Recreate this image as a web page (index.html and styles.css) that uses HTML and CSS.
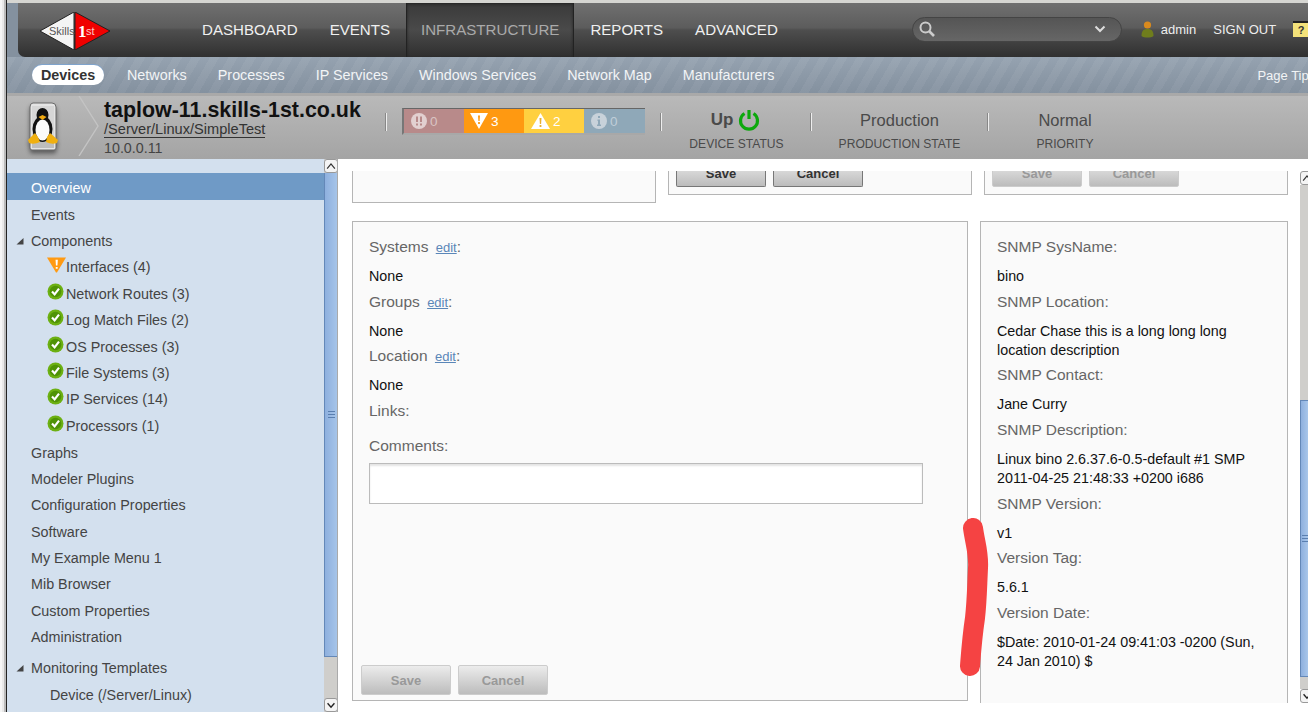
FILE: index.html
```html
<!DOCTYPE html>
<html lang="en">
<head>
    <meta charset="UTF-8">
    <title>taplow-11.skills-1st.co.uk</title>
    <link rel="stylesheet" href="styles.css">
</head>
<body>

<svg class="defs" width="0" height="0">
    <symbol id="ok" viewBox="0 0 17 17">
        <circle cx="8.5" cy="8.5" r="8" fill="#6cb012"/>
        <circle cx="8.5" cy="8.5" r="5.8" fill="#4f9306"/>
        <path d="M5 8.6 L7.6 11.4 L12 5.6" fill="none" stroke="#fff" stroke-width="2.2"/>
    </symbol>
    <symbol id="warn" viewBox="0 0 20 16">
        <path d="M0 0 H20 L10.5 16 H9.5 Z" fill="#ff9a12"/>
        <path d="M9 2.5 H11.4 L11 8.5 H9.4 Z M9.2 10 H11.2 V12 H9.2 Z" fill="#fff"/>
    </symbol>
    <symbol id="expand" viewBox="0 0 8 8">
        <path d="M7.5 1 V7.5 H0.5 Z" fill="#444"/>
    </symbol>
    <symbol id="up" viewBox="0 0 14 14">
        <path d="M2.5 10 L7 4.5 L11.5 10" fill="none" stroke="#333" stroke-width="1.4"/>
    </symbol>
    <symbol id="down" viewBox="0 0 14 14">
        <path d="M3 5 L7 9.5 L11 5" fill="none" stroke="#222" stroke-width="1.6"/>
    </symbol>
</svg>

<div class="frame-edge"></div>

<div class="page">

    <div class="topnav-wrap">
        <div class="topnav">
            <div class="logo">
                <svg width="70" height="38" viewBox="0 0 70 38">
                    <path d="M0 19 L34 0 V38 Z" fill="#f4f4f4" stroke="#222" stroke-width="1"/>
                    <path d="M35 0 L70 19 L35 38 Z" fill="#f00000" stroke="#222" stroke-width="1"/>
                    <text x="9" y="23" class="logo-skills">Skills</text>
                    <text x="38" y="25" class="logo-first">1</text>
                    <text x="46" y="23" class="logo-st">st</text>
                </svg>
            </div>
            <a class="nav-item">DASHBOARD</a>
            <a class="nav-item">EVENTS</a>
            <a class="nav-item active">INFRASTRUCTURE</a>
            <a class="nav-item">REPORTS</a>
            <a class="nav-item">ADVANCED</a>
            <div class="search">
                <svg width="18" height="18" viewBox="0 0 18 18">
                    <circle cx="7.5" cy="7.5" r="5" fill="none" stroke="#ccc" stroke-width="2"/>
                    <path d="M11 11 L16 16" stroke="#ccc" stroke-width="2.6"/>
                </svg>
                <svg class="search-arrow" width="12" height="8" viewBox="0 0 12 8">
                    <path d="M1.5 1.5 L6 6 L10.5 1.5" fill="none" stroke="#ddd" stroke-width="2"/>
                </svg>
            </div>
            <svg class="user-icon" width="13" height="17" viewBox="0 0 13 17">
                <circle cx="6.5" cy="4" r="3.6" fill="#d98a1e"/>
                <path d="M0.5 15 C0.5 9 3 8 6.5 8 C10 8 12.5 9 12.5 15 C10 17 3 17 0.5 15 Z" fill="#6f7d1c"/>
            </svg>
            <span class="user-name">admin</span>
            <span class="sign-out">SIGN OUT</span>
            <span class="help-icon">?</span>
        </div>
    </div>

    <div class="subnav">
        <a class="sub-item current">Devices</a>
        <a class="sub-item">Networks</a>
        <a class="sub-item">Processes</a>
        <a class="sub-item">IP Services</a>
        <a class="sub-item">Windows Services</a>
        <a class="sub-item">Network Map</a>
        <a class="sub-item">Manufacturers</a>
        <a class="sub-item page-tips">Page Tips</a>
    </div>

    <div class="device-head">
        <svg class="device-icon" width="30" height="50" viewBox="0 0 30 50">
            <path d="M5 1 H24 Q28 1 28 5 V46 Q28 48 26 48 H4 Q2 48 2 46 V5 Q2 1 5 1 Z" fill="#e4e4e4" stroke="#6a6a6a"/>
            <rect x="4" y="4" width="22" height="36" fill="#d6d6d6"/>
            <rect x="4" y="40" width="22" height="6" fill="#bdbdbd"/>
            <ellipse cx="14.5" cy="27" rx="10" ry="13" fill="#111"/>
            <ellipse cx="14.5" cy="13" rx="6" ry="7" fill="#111"/>
            <ellipse cx="14.5" cy="28" rx="7" ry="10.5" fill="#fafafa"/>
            <path d="M10.5 15 L14.5 13 L18.5 15 L14.5 18 Z" fill="#f0a810"/>
            <path d="M0 38 L7 31 L10 35 L12 40 Q6 43 1 41 Z" fill="#f0b010"/>
            <path d="M30 38 L22 31 L19 35 L18 40 Q24 43 29 41 Z" fill="#f0b010"/>
        </svg>
        <svg class="chevron" width="22" height="60" viewBox="0 0 22 60">
            <path d="M1 0 L20 30 L1 60" fill="none" stroke="#c4c4c4" stroke-width="1.4"/>
        </svg>
        <div class="device-title">
            <div class="host">taplow-11.skills-1st.co.uk</div>
            <a class="device-class">/Server/Linux/SimpleTest</a>
            <div class="device-ip">10.0.0.11</div>
        </div>

        <div class="divider"></div>

        <div class="health">
            <div class="sev sev-critical">
                <svg width="16" height="16" viewBox="0 0 16 16">
                    <circle cx="8" cy="8" r="8" fill="#e2d0d0"/>
                    <path d="M5 3.5 H7 V9 H5 Z M9 3.5 H11 V9 H9 Z M5 10.5 H7 V12.5 H5 Z M9 10.5 H11 V12.5 H9 Z" fill="#b88a8a"/>
                </svg>
                <span>0</span>
            </div>
            <div class="sev sev-error">
                <svg width="18" height="16" viewBox="0 0 18 16">
                    <path d="M0 0 H18 L9 16 Z" fill="#fff"/>
                    <path d="M8 2.5 H10 L9.6 8 H8.4 Z M8.1 9 H9.9 V11 H8.1 Z" fill="#ff9911"/>
                </svg>
                <span>3</span>
            </div>
            <div class="sev sev-warning">
                <svg width="19" height="16" viewBox="0 0 19 16">
                    <path d="M9.5 0 L19 16 H0 Z" fill="#fff"/>
                    <path d="M8.5 5 H10.5 L10.1 11 H8.9 Z M8.6 12 H10.4 V14 H8.6 Z" fill="#e8b030"/>
                </svg>
                <span>2</span>
            </div>
            <div class="sev sev-info">
                <svg width="16" height="16" viewBox="0 0 16 16">
                    <circle cx="8" cy="8" r="8" fill="#c8d2da"/>
                    <path d="M7 3 H9 V5 H7 Z M6.5 6.5 H9 V11.5 H10 V13 H6 V11.5 H7 V8 H6.5 Z" fill="#8fa8b8"/>
                </svg>
                <span>0</span>
            </div>
        </div>

        <div class="divider"></div>
        <div class="stat stat-status">
            <div class="stat-value stat-up">Up
                <svg width="22" height="22" viewBox="0 0 22 22">
                    <path d="M6.5 4.5 A8.5 8.5 0 1 0 15.5 4.5" fill="none" stroke="#0ca80c" stroke-width="3.2"/>
                    <path d="M11 1 V10" stroke="#0ca80c" stroke-width="3.2"/>
                </svg>
            </div>
            <div class="stat-label">DEVICE STATUS</div>
        </div>
        <div class="divider"></div>
        <div class="stat stat-prod">
            <div class="stat-value">Production</div>
            <div class="stat-label">PRODUCTION STATE</div>
        </div>
        <div class="divider"></div>
        <div class="stat stat-prio">
            <div class="stat-value">Normal</div>
            <div class="stat-label">PRIORITY</div>
        </div>
    </div>

    <div class="workspace">

        <div class="side">
            <div class="side-list">
                <div class="side-item selected">Overview</div>
                <div class="side-item">Events</div>
                <div class="side-item"><svg class="expander" width="8" height="8"><use href="#expand"/></svg>Components</div>
                <div class="side-item child"><svg class="status-icon warn-icon" width="19" height="16"><use href="#warn"/></svg>Interfaces (4)</div>
                <div class="side-item child"><svg class="status-icon" width="17" height="17"><use href="#ok"/></svg>Network Routes (3)</div>
                <div class="side-item child"><svg class="status-icon" width="17" height="17"><use href="#ok"/></svg>Log Match Files (2)</div>
                <div class="side-item child"><svg class="status-icon" width="17" height="17"><use href="#ok"/></svg>OS Processes (3)</div>
                <div class="side-item child"><svg class="status-icon" width="17" height="17"><use href="#ok"/></svg>File Systems (3)</div>
                <div class="side-item child"><svg class="status-icon" width="17" height="17"><use href="#ok"/></svg>IP Services (14)</div>
                <div class="side-item child"><svg class="status-icon" width="17" height="17"><use href="#ok"/></svg>Processors (1)</div>
                <div class="side-item">Graphs</div>
                <div class="side-item">Modeler Plugins</div>
                <div class="side-item">Configuration Properties</div>
                <div class="side-item">Software</div>
                <div class="side-item">My Example Menu 1</div>
                <div class="side-item">Mib Browser</div>
                <div class="side-item">Custom Properties</div>
                <div class="side-item">Administration</div>
                <div class="side-item group-start"><svg class="expander" width="8" height="8"><use href="#expand"/></svg>Monitoring Templates</div>
                <div class="side-item template">Device (/Server/Linux)</div>
            </div>
            <div class="scrollbar side-scroll">
                <div class="scroll-btn"><svg width="12" height="12"><use href="#up"/></svg></div>
                <div class="scroll-thumb side-thumb"><span class="grip"></span></div>
                <div class="scroll-track"></div>
                <div class="scroll-btn"><svg width="12" height="12"><use href="#down"/></svg></div>
            </div>
        </div>

        <div class="content">
            <div class="panels">
                <div class="panel-row">
                    <div class="panel panel-blank"></div>
                    <div class="panel panel-buttons">
                        <button class="btn">Save</button>
                        <button class="btn">Cancel</button>
                    </div>
                    <div class="panel panel-buttons">
                        <button class="btn off">Save</button>
                        <button class="btn off">Cancel</button>
                    </div>
                </div>

                <div class="panel-row lower">
                    <div class="panel panel-form">
                        <div class="label">Systems <a class="edit">edit</a>:</div>
                        <div class="value">None</div>
                        <div class="label">Groups <a class="edit">edit</a>:</div>
                        <div class="value">None</div>
                        <div class="label">Location <a class="edit">edit</a>:</div>
                        <div class="value">None</div>
                        <div class="label">Links:</div>
                        <div class="label comments-label">Comments:</div>
                        <div class="comments"></div>
                        <div class="form-buttons">
                            <button class="btn off">Save</button>
                            <button class="btn off">Cancel</button>
                        </div>
                    </div>
                    <div class="panel panel-snmp">
                        <div class="label">SNMP SysName:</div>
                        <div class="value">bino</div>
                        <div class="label">SNMP Location:</div>
                        <div class="value">Cedar Chase this is a long long long location description</div>
                        <div class="label">SNMP Contact:</div>
                        <div class="value">Jane Curry</div>
                        <div class="label">SNMP Description:</div>
                        <div class="value">Linux bino 2.6.37.6-0.5-default #1 SMP 2011-04-25 21:48:33 +0200 i686</div>
                        <div class="label">SNMP Version:</div>
                        <div class="value">v1</div>
                        <div class="label">Version Tag:</div>
                        <div class="value">5.6.1</div>
                        <div class="label">Version Date:</div>
                        <div class="value">$Date: 2010-01-24 09:41:03 -0200 (Sun, 24 Jan 2010) $</div>
                    </div>
                </div>
            </div>
            <div class="scrollbar main-scroll">
                <div class="scroll-btn"><svg width="12" height="12"><use href="#up"/></svg></div>
                <div class="scroll-track main-track-top"></div>
                <div class="scroll-thumb main-thumb"><span class="grip"></span></div>
                <div class="scroll-track"></div>
                <div class="scroll-btn"><svg width="12" height="12"><use href="#down"/></svg></div>
            </div>
        </div>

    </div>
</div>

<!-- hand drawn mark on top of the screenshot -->
<svg class="scribble" width="40" height="170" viewBox="0 0 40 170">
    <path d="M13 10 C15 25 19 35 18 50 C17 70 17 82 15 100 C12 120 11 135 10 148" fill="none" stroke="#f54343" stroke-width="20" stroke-linecap="round"/>
</svg>

</body>
</html>
```

FILE: styles.css
```css
* {
    box-sizing: border-box;
}

html, body {
    height: 100%;
}

body {
    margin: 0;
    display: flex;
    height: 712px;
    overflow: hidden;
    background: white;
    font-family: "Liberation Sans", Arial, sans-serif;
    color: #444;
}

.defs {
    position: absolute;
}

.frame-edge {
    width: 7px;
    flex-shrink: 0;
    background: #e9e9e9;
    border-left: 2px solid #f6f6f6;
    border-right: 1px solid #222;
    box-shadow: inset -2px 0 0 #bbb;
}

.page {
    width: 1301px;
    display: flex;
    flex-direction: column;
    border-top: 3px solid #d6d6d2;
}

/* top nav */
.topnav-wrap {
    background: #84919f;
    padding-left: 11px;
}

.topnav {
    height: 54px;
    display: flex;
    align-items: center;
    border-bottom-left-radius: 7px;
    background: linear-gradient(#707070, #5c5c5c 46%, #4e4e4e 50%, #303030);
    overflow: hidden;
}

.logo {
    width: 168px;
    flex-shrink: 0;
    padding: 2px 0 0 22px;
}

.logo svg {
    display: block;
}

.logo-skills {
    font-size: 11px;
    fill: #555;
}

.logo-first {
    font-family: "Liberation Serif", serif;
    font-weight: bold;
    font-size: 17px;
    fill: white;
}

.logo-st {
    font-size: 11px;
    fill: #ffc8c8;
}

.nav-item {
    height: 100%;
    line-height: 54px;
    padding: 0 16px;
    font-size: 15.1px;
    color: #f0f0f0;
    flex-shrink: 0;
}

.nav-item.active {
    color: #aaa;
    padding: 0 14px;
    background: linear-gradient(#3a3a3a, #4a4a4a 50%, #2f2f2f);
    border-left: 1px solid #222;
    border-right: 1px solid #222;
    box-shadow: inset 0 1px 3px #222;
}

.search {
    width: 210px;
    height: 25px;
    margin: 0 0 2px 118px;
    padding: 0 5px;
    display: flex;
    align-items: center;
    justify-content: space-between;
    flex-shrink: 0;
    border-radius: 13px;
    background: linear-gradient(#555, #666);
    border: 1px solid #444;
}

.search-arrow {
    margin-right: 10px;
}

.user-icon {
    margin: 0 0 2px 19px;
    flex-shrink: 0;
}

.user-name {
    margin: 0 0 1px 7px;
    font-size: 13px;
    color: #eee;
    flex-shrink: 0;
}

.sign-out {
    margin: 0 0 1px 17px;
    font-size: 13px;
    color: #eee;
    flex-shrink: 0;
}

.help-icon {
    width: 16px;
    height: 16px;
    margin: 0 0 2px 17px;
    flex-shrink: 0;
    background: #f4e27a;
    border-top: 2px solid #222;
    color: #333;
    font-size: 11px;
    font-weight: bold;
    line-height: 14px;
    text-align: center;
}

/* sub nav */
.subnav {
    height: 36px;
    padding: 0 0 0 25px;
    display: flex;
    align-items: center;
    gap: 31px;
    overflow: hidden;
    background:
        repeating-linear-gradient(120deg, rgba(255,255,255,0.05) 0 8px, rgba(255,255,255,0) 8px 16px),
        linear-gradient(#95a2b0, #84919f);
}

.sub-item {
    font-size: 14.35px;
    color: #f2f4f6;
    flex-shrink: 0;
}

.sub-item.current {
    width: 72px;
    height: 20px;
    margin-right: -8px;
    line-height: 20px;
    text-align: center;
    font-weight: bold;
    color: #333;
    background: white;
    border-radius: 10px;
    box-shadow: 0 -1px 0 #7fa3cc;
}

.sub-item.page-tips {
    margin-left: 452px;
    font-size: 13px;
}

/* device header */
.device-head {
    height: 66px;
    display: flex;
    align-items: flex-start;
    background: linear-gradient(#b9b9b9, #a4a4a4);
    border-top: 3px solid #a9a9a9;
}

.device-icon {
    margin: 6px 0 0 21px;
    flex-shrink: 0;
    filter: drop-shadow(0 3px 2px rgba(0, 0, 0, 0.45));
}

.chevron {
    margin: 0 0 0 20px;
    flex-shrink: 0;
}

.device-title {
    width: 282px;
    margin-left: 4px;
    padding-top: 3.5px;
    flex-shrink: 0;
}

.host {
    height: 21px;
    line-height: 21px;
    font-size: 21.4px;
    font-weight: bold;
    color: #111;
    white-space: nowrap;
}

.device-class {
    display: block;
    width: fit-content;
    height: 17px;
    line-height: 16px;
    font-size: 14.6px;
    color: #333;
    border-bottom: 1px solid #333;
}

.device-ip {
    height: 20px;
    line-height: 20px;
    font-size: 14.3px;
    color: #444;
}

.divider {
    width: 1px;
    height: 18px;
    margin-top: 17px;
    flex-shrink: 0;
    background: #eee;
    box-shadow: -1px 0 0 #888;
}

.health {
    width: 243px;
    height: 27px;
    margin: 12px 16px 0 15px;
    display: flex;
    flex-shrink: 0;
    border-top: 1px solid #666;
    border-left: 2px solid #777;
    border-bottom: 2px solid #a8a8a8;
}

.sev {
    width: 60px;
    display: flex;
    align-items: center;
    gap: 3px;
    padding-left: 7px;
    font-size: 13.5px;
    color: white;
    flex-shrink: 0;
}

.sev-critical {
    background: #b88a8a;
    color: #d8c4c4;
}

.sev-error {
    background: #ff9911;
    padding-left: 6px;
}

.sev-warning {
    background: #ffd040;
}

.sev-info {
    width: 61px;
    background: #8fa8b8;
    color: #c0ced8;
}

.stat {
    text-align: center;
    flex-shrink: 0;
    padding-top: 12px;
}

.stat-status {
    width: 149px;
}

.stat-up {
    padding-right: 2px;
}

.stat-prod {
    width: 176px;
    padding-right: 1px;
}

.stat-prio {
    width: 152px;
}

.stat-value {
    height: 24px;
    line-height: 24px;
    font-size: 16.5px;
    color: #4a4a4a;
}

.stat-up {
    display: flex;
    align-items: center;
    justify-content: center;
    gap: 5px;
    font-weight: bold;
    font-size: 17px;
}

.stat-label {
    margin-top: 4px;
    font-size: 12.1px;
    line-height: 16px;
    color: #4a4a4a;
}

/* lower area */
.workspace {
    flex: 1;
    min-height: 0;
    display: flex;
}

.side {
    width: 331px;
    display: flex;
    flex-shrink: 0;
    border-right: 1px solid #aaa;
    overflow: hidden;
}

.side-list {
    width: 317px;
    padding-top: 14px;
    background: #d3e0ee;
    flex-shrink: 0;
}

.side-item {
    position: relative;
    height: 26.4px;
    line-height: 30px;
    padding-left: 24px;
    font-size: 14.35px;
    color: #444;
    white-space: nowrap;
}

.side-item.selected {
    height: 27px;
    background: #6f9ac6;
    color: white;
}

.side-item.child {
    display: flex;
    align-items: center;
    padding-left: 40px;
    padding-top: 3px;
    line-height: 20px;
}

.side-item.group-start {
    margin-top: 4.6px;
}

.side-item.template {
    padding-left: 43px;
}

.expander {
    position: absolute;
    left: 9px;
    top: 11px;
}

.status-icon {
    flex-shrink: 0;
    margin-top: -5px;
    margin-right: 2px;
}

.status-icon.warn-icon {
    margin-right: 0;
}

.scrollbar {
    display: flex;
    flex-direction: column;
    flex-shrink: 0;
}

.side-scroll {
    width: 14px;
    background: #ccc;
}

.scroll-btn {
    height: 14px;
    flex-shrink: 0;
    display: flex;
    align-items: center;
    justify-content: center;
    background: #f4f4f4;
    border: 1px solid #999;
    border-radius: 3px;
}

.scroll-thumb {
    flex-shrink: 0;
    display: flex;
    align-items: center;
    justify-content: center;
    background: linear-gradient(90deg, #8eb0de, #a8c6ea);
    border: 1px solid #6488b8;
    border-width: 0 0 1px 1px;
}

.side-thumb {
    height: 484px;
}

.scroll-track {
    flex: 1;
    background: #cfcecb;
}

.grip {
    width: 7px;
    height: 7px;
    border-top: 1px solid #5a7fb0;
    border-bottom: 1px solid #5a7fb0;
    background: linear-gradient(#5a7fb0, #5a7fb0) center / 100% 1px no-repeat;
}

.content {
    flex: 1;
    min-width: 0;
    padding: 12px 0 9px 14px;
    display: flex;
}

.panels {
    width: 948px;
    flex-shrink: 0;
    overflow: hidden;
}

.main-scroll {
    width: 8px;
    overflow: hidden;
}

.main-scroll .scroll-btn {
    width: 14px;
    justify-content: flex-start;
}

.main-track-top {
    flex: none;
    height: 215px;
}

.main-thumb {
    height: 277px;
    justify-content: flex-start;
    padding-left: 1px;
    border-top: 1px solid #6488b8;
}

.panel-row {
    display: flex;
    align-items: flex-start;
    gap: 12px;
}

.panel-row.lower {
    margin-top: 18px;
}

.panel {
    background: #fafafa;
    border: 1px solid #b5b5b5;
    flex-shrink: 0;
}

.panel-row:first-child .panel {
    border-top: 0;
}

.panel-blank {
    width: 304px;
    height: 32px;
}

.panel-buttons {
    width: 304px;
    height: 24px;
    display: flex;
    align-items: flex-end;
    gap: 7px;
    padding: 0 7px 7px;
    overflow: hidden;
}

.panel-buttons .btn {
    height: 28px;
    flex-shrink: 0;
}

.panel-form {
    position: relative;
    width: 616px;
    height: 480px;
    padding: 15px 16px 0;
}

.panel-snmp {
    width: 308px;
    height: 490px;
    padding: 15px 16px 0;
    border-bottom: 0;
}

.label {
    height: 20px;
    line-height: 20px;
    margin-bottom: 9.9px;
    font-size: 15.5px;
    color: #666;
}

.value {
    line-height: 19px;
    margin-bottom: 5.77px;
    font-size: 14.3px;
    color: #111;
}

.edit {
    font-size: 13px;
    color: #5a86b8;
    text-decoration: underline;
    margin-left: 3px;
}

.comments-label {
    margin-top: 15px;
    margin-bottom: 7px;
}

.comments {
    width: 554px;
    height: 41px;
    background: white;
    border: 1px solid #bbb;
    box-shadow: inset 0 2px 2px #e4e4e4;
}

.form-buttons {
    position: absolute;
    left: 8px;
    bottom: 5px;
    display: flex;
    gap: 7px;
}

.btn {
    width: 90px;
    height: 30px;
    padding: 0;
    font-family: inherit;
    font-size: 13px;
    font-weight: bold;
    color: #333;
    background: linear-gradient(#ececec, #bcbcbc);
    border: 1px solid #777;
    border-top-color: #aaa;
    border-radius: 2px;
}

.btn.off {
    color: #999;
    border-color: #ccc;
}

.scribble {
    position: absolute;
    left: 960px;
    top: 518px;
}
```
